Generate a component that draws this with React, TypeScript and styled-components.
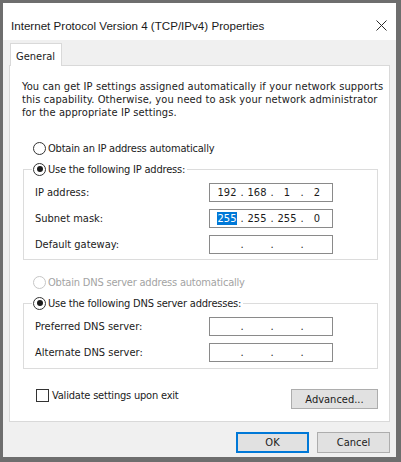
import React from "react";
import styled, { createGlobalStyle, css } from "styled-components";

const Global = createGlobalStyle`
  html, body { margin: 0; padding: 0; background: #ffffff; }
  body { width: 401px; height: 462px; overflow: hidden; }
  * { box-sizing: border-box; }
`;

const UI_FONT = `"DejaVu Sans Condensed", "DejaVu Sans", sans-serif`;

const Window = styled.div`
  width: 401px;
  height: 462px;
  border-style: solid;
  border-color: #6e6e6e;
  border-width: 3px 5px 5px 3px;
  display: flex;
  flex-direction: column;
  background: #f0f0f0;
  font-family: ${UI_FONT};
  font-size: 11px;
  color: #1b1b1b;
`;

const TitleBar = styled.div`
  height: 37px;
  flex: none;
  background: #ffffff;
  display: flex;
  align-items: center;
  justify-content: space-between;
  padding: 7px 9px 0 8px;
`;

const Title = styled.span`
  font-family: "Liberation Sans", Arial, sans-serif;
  font-size: 11.6px;
  color: #1a1a1a;
`;

const CloseIcon = () => (
  <svg width="11" height="11" viewBox="0 0 11 11">
    <path d="M0.5 0.5 L10.5 10.5 M10.5 0.5 L0.5 10.5" stroke="#2b2b2b" strokeWidth="1" fill="none" />
  </svg>
);

const Body = styled.div`
  flex: 1;
  display: flex;
  flex-direction: column;
  padding: 3px 6px 4px 6px;
`;

const TabStrip = styled.div`
  display: flex;
  padding-left: 1px;
  margin-bottom: -1px;
  position: relative;
  z-index: 1;
`;

const Tab = styled.div`
  height: 23px;
  padding: 3px 6px 0 5px;
  display: flex;
  align-items: center;
  background: #ffffff;
  border: 1px solid #d9d9d9;
  border-bottom: none;
`;

const Panel = styled.div`
  background: #ffffff;
  border: 1px solid #d9d9d9;
  padding: 14px 11px 12px 12px;
  display: flex;
  flex-direction: column;
`;

const Description = styled.p`
  margin: 0;
  line-height: 13px;
  letter-spacing: 0.1px;
  white-space: nowrap;
`;

const RadioRow = styled.label<{ $disabled?: boolean; $gapTop: number }>`
  display: flex;
  align-items: center;
  gap: 2px;
  height: 13px;
  margin: ${(p) => p.$gapTop}px 0 0 11px;
  letter-spacing: -0.2px;
  color: ${(p) => (p.$disabled ? "#a3a3a3" : "inherit")};
`;

const RadioDot = styled.span<{ $checked?: boolean; $disabled?: boolean }>`
  width: 13px;
  height: 13px;
  flex: none;
  border-radius: 50%;
  border: 1px solid ${(p) => (p.$disabled ? "#c6c6c6" : "#333333")};
  background: #ffffff;
  display: flex;
  align-items: center;
  justify-content: center;
  ${(p) =>
    p.$checked &&
    css`
      &::after {
        content: "";
        width: 6px;
        height: 6px;
        border-radius: 50%;
        background: #1b1b1b;
      }
    `}
`;

const Group = styled.fieldset<{ $gapTop: number; $padBottom: number }>`
  margin: ${(p) => p.$gapTop}px 0 0 1px;
  border: 1px solid #dcdcdc;
  padding: 7px 0 ${(p) => p.$padBottom}px 11px;
  min-width: 0;
  display: flex;
  flex-direction: column;
  gap: 7px;
`;

const Legend = styled.legend`
  height: 14px;
  margin-left: -3px;
  padding: 0 2px 0 1px;
  display: flex;
  align-items: center;
  gap: 2px;
  letter-spacing: -0.2px;
`;

const FieldRow = styled.div`
  display: grid;
  grid-template-columns: 174px 124px;
  align-items: center;
`;

const IpBox = styled.div`
  height: 19px;
  border: 1px solid #8a8a8a;
  background: #ffffff;
  display: flex;
  align-items: center;
  padding-left: 4px;
`;

const Segment = styled.span`
  width: 26px;
  text-align: center;
`;

const Dot = styled.span`
  width: 4px;
  text-align: center;
`;

const Selected = styled.span`
  background: #0078d7;
  color: #ffffff;
  padding: 0 1px;
`;

const BottomRow = styled.div`
  display: flex;
  justify-content: space-between;
  align-items: flex-start;
  margin-top: 20px;
`;

const CheckLabel = styled.label`
  display: flex;
  align-items: center;
  gap: 3px;
  margin-left: 14px;
  letter-spacing: -0.2px;
`;

const CheckBox = styled.span`
  width: 13px;
  height: 13px;
  border: 1px solid #333333;
  background: #ffffff;
`;

const Button = styled.div<{ $default?: boolean; $w: number; $h: number }>`
  width: ${(p) => p.$w}px;
  height: ${(p) => p.$h}px;
  display: flex;
  align-items: center;
  justify-content: center;
  background: #e1e1e1;
  border: 1px solid ${(p) => (p.$default ? "#0078d7" : "#adadad")};
  box-shadow: ${(p) => (p.$default ? "inset 0 0 0 1px #0078d7" : "none")};
`;

const Footer = styled.div`
  display: flex;
  justify-content: flex-end;
  gap: 8px;
  margin-top: 10px;
`;

type IpProps = { parts: string[]; selectFirst?: boolean };

const IpField = ({ parts, selectFirst }: IpProps) => (
  <IpBox>
    {parts.map((p, i) => (
      <React.Fragment key={i}>
        <Segment>{i === 0 && selectFirst ? <Selected>{p}</Selected> : p}</Segment>
        {i < 3 && <Dot>.</Dot>}
      </React.Fragment>
    ))}
  </IpBox>
);

const empty = ["", "", "", ""];

export default function App() {
  return (
    <>
      <Global />
      <Window>
        <TitleBar>
          <Title>Internet Protocol Version 4 (TCP/IPv4) Properties</Title>
          <CloseIcon />
        </TitleBar>
        <Body>
          <TabStrip>
            <Tab>General</Tab>
          </TabStrip>
          <Panel>
            <Description>
              You can get IP settings assigned automatically if your network supports
              <br />
              this capability. Otherwise, you need to ask your network administrator
              <br />
              for the appropriate IP settings.
            </Description>
            <RadioRow $gapTop={23}>
              <RadioDot />
              Obtain an IP address automatically
            </RadioRow>
            <Group $gapTop={7} $padBottom={5}>
              <Legend>
                <RadioDot $checked />
                Use the following IP address:
              </Legend>
              <FieldRow>
                <span>IP address:</span>
                <IpField parts={["192", "168", "1", "2"]} />
              </FieldRow>
              <FieldRow>
                <span>Subnet mask:</span>
                <IpField parts={["255", "255", "255", "0"]} selectFirst />
              </FieldRow>
              <FieldRow>
                <span>Default gateway:</span>
                <IpField parts={empty} />
              </FieldRow>
            </Group>
            <RadioRow $gapTop={16} $disabled>
              <RadioDot $disabled />
              Obtain DNS server address automatically
            </RadioRow>
            <Group $gapTop={7} $padBottom={6}>
              <Legend>
                <RadioDot $checked />
                Use the following DNS server addresses:
              </Legend>
              <FieldRow>
                <span>Preferred DNS server:</span>
                <IpField parts={empty} />
              </FieldRow>
              <FieldRow>
                <span>Alternate DNS server:</span>
                <IpField parts={empty} />
              </FieldRow>
            </Group>
            <BottomRow>
              <CheckLabel>
                <CheckBox />
                Validate settings upon exit
              </CheckLabel>
              <Button $w={87} $h={20}>Advanced...</Button>
            </BottomRow>
          </Panel>
          <Footer>
            <Button $default $w={73} $h={21}>OK</Button>
            <Button $w={73} $h={21}>Cancel</Button>
          </Footer>
        </Body>
      </Window>
    </>
  );
}
